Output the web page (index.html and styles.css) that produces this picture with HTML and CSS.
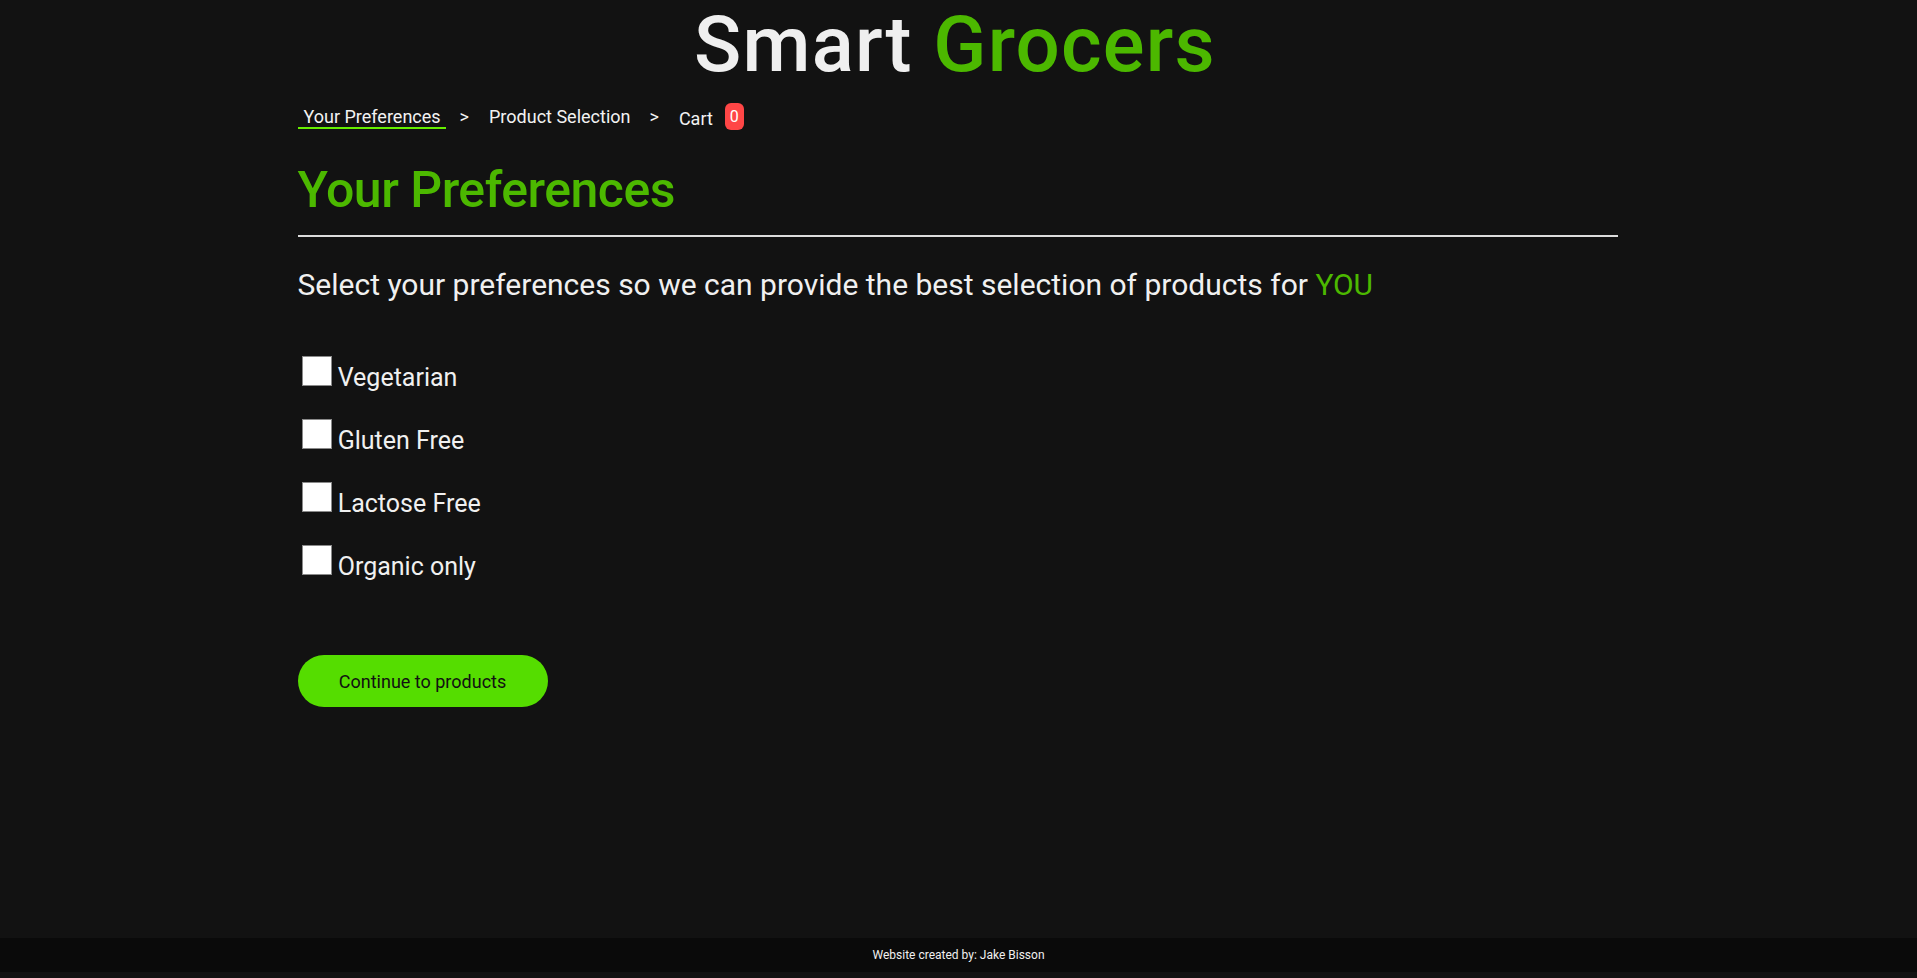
FILE: index.html
```html
<!DOCTYPE html>
<html lang="en">
<head>
<meta charset="utf-8">
<title>Smart Grocers</title>
<link rel="stylesheet" href="styles.css">
</head>
<body>
<div class="page">
  <header class="site-header">
    <h1 class="brand">Smart <span class="brand-accent">Grocers</span></h1>
  </header>
  <main class="container">
    <nav class="crumbs">
      <a class="crumb crumb-active" href="#">Your Preferences</a>
      <span class="crumb-sep">&gt;</span>
      <a class="crumb" href="#">Product Selection</a>
      <span class="crumb-sep">&gt;</span>
      <a class="crumb crumb-cart" href="#">Cart <span class="badge">0</span></a>
    </nav>
    <h2 class="page-title">Your Preferences</h2>
    <hr class="divider">
    <p class="lead">Select your preferences so we can provide the best selection of products for <span class="accent">YOU</span></p>
    <form class="prefs">
      <label class="pref"><input class="check" type="checkbox"> Vegetarian</label>
      <label class="pref"><input class="check" type="checkbox"> Gluten Free</label>
      <label class="pref"><input class="check" type="checkbox"> Lactose Free</label>
      <label class="pref"><input class="check" type="checkbox"> Organic only</label>
    </form>
    <button class="btn" type="button">Continue to products</button>
  </main>
  <footer class="site-footer">Website created by: Jake Bisson</footer>
</div>
</body>
</html>
```

FILE: styles.css
```css
html, body {
  margin: 0;
  padding: 0;
}
body {
  background: #121212;
  color: #f0f0f0;
  font-family: Roboto, "Liberation Sans", sans-serif;
}
.page {
  min-height: 100vh;
  display: flex;
  flex-direction: column;
}
.site-header {
  text-align: center;
  padding-right: 7px;
}
.brand {
  margin: -1px 0 0;
  font-size: 78px;
  font-weight: 500;
  line-height: normal;
  color: #efefef;
  letter-spacing: 1.2px;
}
.brand-accent {
  color: #4cb800;
}
.container {
  flex: 1;
  width: 1320px;
  margin-left: calc((100% - 1320px) / 2 - 1px);
}
.crumbs {
  display: flex;
  align-items: flex-start;
  gap: 14px;
  margin-top: 16px;
  font-size: 18px;
  line-height: normal;
}
.crumb {
  color: #f2f2f2;
  text-decoration: none;
  padding: 0 5px 0 6px;
  border-bottom: 2px solid transparent;
}
.crumb-active {
  border-bottom-color: #66ee00;
}
.crumb-sep {
  color: #f2f2f2;
}
.crumb-cart {
  display: flex;
  align-items: center;
}
.badge {
  display: inline-block;
  margin-left: 12px;
  margin-top: -3px;
  padding: 3px 5px;
  background: #ff4646;
  color: #fff;
  border-radius: 6px;
  font-size: 16px;
  line-height: 21px;
}
.page-title {
  margin: 29px 0 0;
  font-size: 50px;
  font-weight: 500;
  line-height: normal;
  letter-spacing: -0.5px;
  color: #4cb800;
}
.divider {
  margin: 16px 0 0;
  height: 2px;
  border: 0;
  background: #dcdcdc;
}
.lead {
  margin: 30px 0 0;
  font-size: 30px;
  line-height: normal;
  color: #f0f0f0;
}
.accent {
  color: #4cb800;
}
.prefs {
  margin-top: 54px;
  display: flex;
  flex-direction: column;
  gap: 27px;
}
.pref {
  display: block;
  font-size: 25px;
  line-height: normal;
  color: #f0f0f0;
  padding-left: 4px;
}
.check {
  appearance: none;
  -webkit-appearance: none;
  display: inline-block;
  vertical-align: baseline;
  margin: 0;
  width: 30px;
  height: 30px;
  background: #fff;
  border: 1px solid #8a8a8a;
  box-sizing: border-box;
}
.btn {
  display: block;
  margin-top: 74px;
  width: 250px;
  height: 52px;
  border: 0;
  border-radius: 26px;
  background: #55dd00;
  color: #111;
  font-family: Roboto, "Liberation Sans", sans-serif;
  font-size: 18px;
  cursor: pointer;
}
.site-footer {
  height: 34px;
  margin-bottom: 6px;
  background: #0a0a0a;
  color: #f0f0f0;
  font-size: 12px;
  line-height: 34px;
  text-align: center;
}
```
